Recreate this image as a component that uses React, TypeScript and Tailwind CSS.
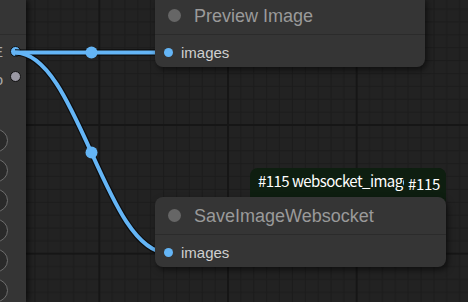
import React from "react";

const BLUE = "#64b5f6";

function Grid() {
  const s = 12.87;
  const minors = [1, 2, 3, 4, 5, 6, 7, 8, 9];
  return (
    <svg className="absolute inset-0" width={468} height={302}>
      <defs>
        <pattern
          id="g"
          patternUnits="userSpaceOnUse"
          width={128.7}
          height={128.7}
          patternTransform="translate(98.3,124)"
        >
          <rect x={0} y={0} width={128.7} height={128.7} fill="#222222" />
          {minors.map((i) => (
            <rect key={"v" + i} x={0.5 + i * s} y={0} width={1} height={128.7} fill="#1b1b1b" />
          ))}
          {minors.map((i) => (
            <rect key={"h" + i} x={0} y={0.5 + i * s} width={128.7} height={1} fill="#1b1b1b" />
          ))}
          <rect x={0} y={0} width={2} height={128.7} fill="#161616" />
          <rect x={0} y={0} width={128.7} height={2} fill="#161616" />
        </pattern>
      </defs>
      <rect width={468} height={302} fill="url(#g)" />
    </svg>
  );
}

function Links() {
  const curve = "M15 52.5 C78 52.5 105 253 168 253";
  const straight = "M15 52.5 L168 52.5";
  return (
    <svg className="absolute inset-0" width={468} height={302}>
      <path d={curve} fill="none" stroke="#000" strokeOpacity={0.6} strokeWidth={6.5} />
      <path d={straight} fill="none" stroke="#000" strokeOpacity={0.6} strokeWidth={6.5} />
      <path d={curve} fill="none" stroke={BLUE} strokeWidth={4} />
      <path d={straight} fill="none" stroke={BLUE} strokeWidth={4} />
      <circle cx={91.5} cy={52.5} r={6} fill={BLUE} />
      <circle cx={91.5} cy={152.5} r={6} fill={BLUE} />
    </svg>
  );
}

function LeftPanel() {
  return (
    <div className="absolute left-0 top-0 h-[302px] w-[26px] overflow-hidden bg-[#353535] shadow-[3px_0_5px_rgba(0,0,0,0.55)] font-['Liberation_Sans',sans-serif]">
      <div className="h-[35px] border-b border-[#2c2c2c]" />
      <div className="flex flex-col pt-[4px]">
        <div className="flex h-[25px] items-center justify-end gap-[7px] pr-[5px]">
          <span className="shrink-0 whitespace-nowrap text-[15px] leading-none text-[#a8a8a8]">IMAGE</span>
          <span className="h-[11px] w-[11px] shrink-0 rounded-full border border-[#111] bg-[#64b5f6]" />
        </div>
        <div className="flex h-[25px] items-center justify-end gap-[7px] pr-[5px]">
          <span className="shrink-0 whitespace-nowrap pt-[6px] text-[15px] leading-none text-[#a8a8a8]">info</span>
          <span className="h-[11px] w-[11px] shrink-0 rounded-full border border-[#111] bg-[#9a98a3]" />
        </div>
      </div>
      <div className="mt-[40px] flex flex-col gap-[7px]">
        {[0, 1, 2, 3, 4, 5].map((i) => (
          <div
            key={i}
            className="-ml-[15.5px] h-[23px] w-[23px] rounded-full border border-[#6e6e6e] bg-[#2a2a2a]"
          />
        ))}
      </div>
    </div>
  );
}

function Node({
  title,
  className,
}: {
  title: string;
  className: string;
}) {
  return (
    <div
      className={
        "absolute flex flex-col bg-[#353535] shadow-[2px_3px_6px_rgba(0,0,0,0.55)] font-['Liberation_Sans',sans-serif] " +
        className
      }
    >
      <div className="flex h-[38px] shrink-0 items-center gap-[13px] border-b border-[#2b2b2b] pl-[13px]">
        <span className="h-[13px] w-[13px] shrink-0 rounded-full bg-[#666666]" />
        <span className="whitespace-nowrap text-[18px] leading-none text-[#9a9a9a]">{title}</span>
      </div>
      <div className="flex h-[32px] items-center gap-[8px] pl-[9px] pt-[3px]">
        <span className="h-[9px] w-[9px] shrink-0 rounded-full bg-[#64b5f6]" />
        <span className="text-[15px] leading-none text-[#cfcfcf]">images</span>
      </div>
    </div>
  );
}

export default function App() {
  return (
    <div className="relative h-[302px] w-[468px] overflow-hidden bg-[#222222]">
      <Grid />
      <LeftPanel />
      <Links />
      <Node title="Preview Image" className="left-[155px] top-[-3px] w-[270px] rounded-b-[8px]" />
      <div className="absolute left-[250px] top-[168px] flex h-[38px] w-[196px] rounded-[8px] bg-[#0e1e10] font-['Noto_Sans_CJK_KR',sans-serif] text-white">
        <span className="min-w-0 flex-1 overflow-hidden whitespace-nowrap pl-[8px] pt-[4px] text-[15px] leading-[18px] tracking-[-0.55px]">
          #115 websocket_image
        </span>
        <span className="w-[42px] shrink-0 rounded-[8px] bg-[#0e1e10] pl-[4px] pt-[7px] text-[15px] leading-[18px] tracking-[-0.3px]">
          #115
        </span>
      </div>
      <Node title="SaveImageWebsocket" className="left-[155px] top-[197px] w-[291px] rounded-[8px]" />
    </div>
  );
}
